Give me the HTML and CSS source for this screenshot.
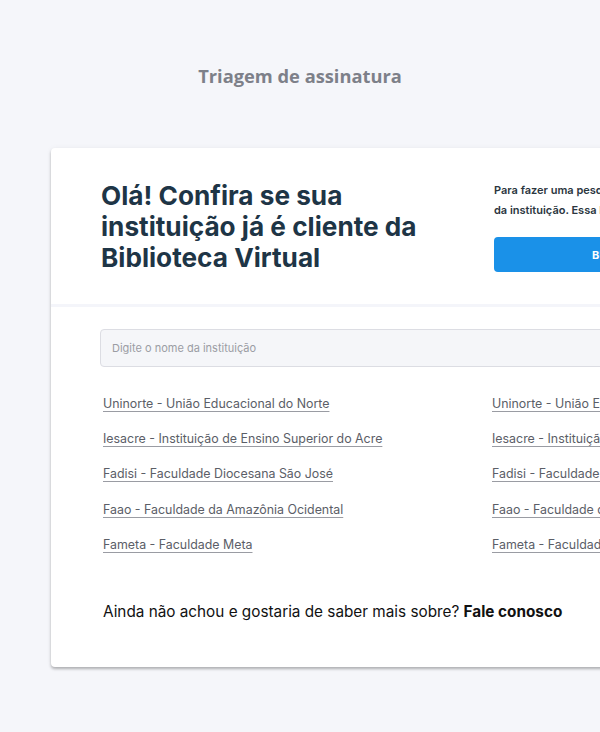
FILE: index.html
```html
<!DOCTYPE html>
<html lang="pt-BR">
<head>
<meta charset="utf-8">
<title>Triagem de assinatura</title>
<link rel="stylesheet" href="styles.css">
</head>
<body>
<main class="page">
  <h1 class="page-title">Triagem de assinatura</h1>
  <section class="card">
    <header class="card-header">
      <h2 class="headline">Olá! Confira se sua instituição já é cliente da Biblioteca Virtual</h2>
      <div class="side">
        <p class="side-text">Para fazer uma pesquisa mais rápida, digite o código<br>da instituição. Essa busca é feita pelo código enviado.</p>
        <button class="btn-primary" type="button">BUSCAR POR CÓDIGO</button>
      </div>
    </header>
    <div class="card-body">
      <input class="search" type="text" placeholder="Digite o nome da instituição">
      <ul class="inst-list">
        <li><a href="#">Uninorte - União Educacional do Norte</a></li>
        <li><a href="#">Uninorte - União Educacional do Norte</a></li>
        <li><a href="#">Iesacre - Instituição de Ensino Superior do Acre</a></li>
        <li><a href="#">Iesacre - Instituição de Ensino Superior do Acre</a></li>
        <li><a href="#">Fadisi - Faculdade Diocesana São José</a></li>
        <li><a href="#">Fadisi - Faculdade Diocesana São José</a></li>
        <li><a href="#">Faao - Faculdade da Amazônia Ocidental</a></li>
        <li><a href="#">Faao - Faculdade da Amazônia Ocidental</a></li>
        <li><a href="#">Fameta - Faculdade Meta</a></li>
        <li><a href="#">Fameta - Faculdade Meta</a></li>
      </ul>
      <p class="contact">Ainda não achou e gostaria de saber mais sobre? <strong>Fale conosco</strong></p>
    </div>
  </section>
</main>
</body>
</html>
```

FILE: styles.css
```css
html, body {
  margin: 0;
  padding: 0;
  overflow: hidden;
}
body {
  background: #f5f6fa;
  font-family: "Inter", "Liberation Sans", sans-serif;
  width: 600px;
  height: 732px;
}
.page {
  padding-top: 61px;
}
.page-title {
  margin: 0;
  text-align: center;
  font-family: "Open Sans", "Liberation Sans", sans-serif;
  font-weight: 700;
  font-size: 18.3px;
  line-height: 29px;
  color: #7d8089;
}
.card {
  margin: 58px 0 0 51px;
  width: 900px;
  background: #fff;
  border-radius: 4px;
  box-shadow: 0 2px 3px rgba(0, 0, 0, 0.28), 0 0 6px rgba(0, 0, 0, 0.04);
}
.card-header {
  display: flex;
  gap: 38px;
  padding: 32px 50px 31px 50px;
  border-bottom: 3px solid #f4f5fa;
}
.headline {
  margin: 0;
  width: 355px;
  font-weight: 700;
  font-size: 26.2px;
  line-height: 31px;
  color: #1e3546;
}
.side {
  padding-top: 0;
  width: 360px;
}
.side-text {
  margin: 0;
  font-size: 11px;
  line-height: 20px;
  font-weight: 600;
  color: #2b3640;
  white-space: nowrap;
}
.btn-primary {
  margin-top: 17px;
  width: 314px;
  height: 35px;
  border: 0;
  border-radius: 4px;
  background: #1a91e8;
  color: #fff;
  font-family: "Inter", "Liberation Sans", sans-serif;
  font-weight: 700;
  font-size: 11px;
}
.card-body {
  padding: 22px 49px 45px 49px;
}
.search {
  display: block;
  box-sizing: border-box;
  width: 700px;
  height: 38px;
  padding: 0 11px;
  border: 1px solid #dcdde3;
  border-radius: 4px;
  background: #f5f6f9;
  font-family: "Inter", "Liberation Sans", sans-serif;
  font-size: 11px;
  color: #333;
}
.search::placeholder {
  color: #9b9da4;
}
.inst-list {
  list-style: none;
  margin: 19px 0 0 0;
  padding: 0 0 0 3px;
  display: grid;
  grid-template-columns: 389px 389px;
  grid-auto-rows: 35.3px;
}
.inst-list li {
  display: flex;
  align-items: center;
}
.inst-list a {
  font-size: 12.4px;
  line-height: 18px;
  color: #5b5e67;
  text-decoration: underline;
  text-decoration-color: #9a9ca3;
  text-underline-offset: 3px;
  text-decoration-thickness: 1px;
  white-space: nowrap;
}
.contact {
  margin: 40px 0 0 3px;
  font-size: 15.3px;
  line-height: 20px;
  color: #111;
}
.contact strong {
  font-weight: 700;
}
```
